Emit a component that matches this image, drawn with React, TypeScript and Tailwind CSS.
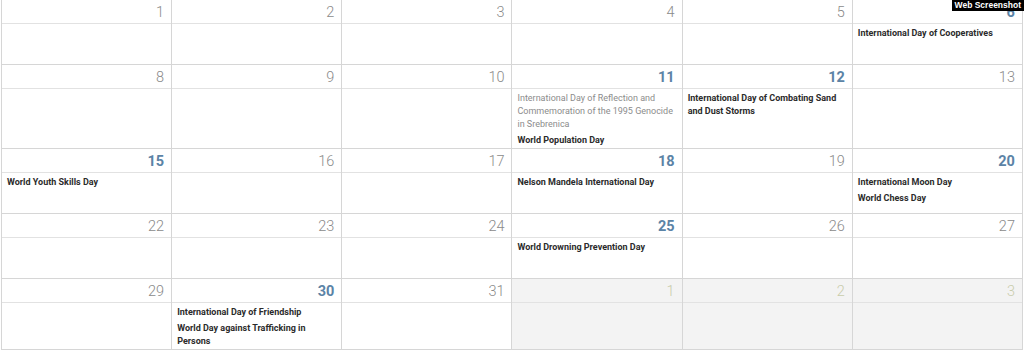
type Event = { title: string; muted?: boolean };

type Day = {
  n: number;
  outside?: boolean;
  events?: Event[];
};

// Monday–Saturday only; the Sunday column runs off the right edge of the view
const weeks: Day[][] = [
  [
    { n: 1 },
    { n: 2 },
    { n: 3 },
    { n: 4 },
    { n: 5 },
    { n: 6, events: [{ title: "International Day of Cooperatives" }] },
  ],
  [
    { n: 8 },
    { n: 9 },
    { n: 10 },
    {
      n: 11,
      events: [
        {
          title:
            "International Day of Reflection and Commemoration of the 1995 Genocide in Srebrenica",
          muted: true,
        },
        { title: "World Population Day" },
      ],
    },
    { n: 12, events: [{ title: "International Day of Combating Sand and Dust Storms" }] },
    { n: 13 },
  ],
  [
    { n: 15, events: [{ title: "World Youth Skills Day" }] },
    { n: 16 },
    { n: 17 },
    { n: 18, events: [{ title: "Nelson Mandela International Day" }] },
    { n: 19 },
    {
      n: 20,
      events: [{ title: "International Moon Day" }, { title: "World Chess Day" }],
    },
  ],
  [
    { n: 22 },
    { n: 23 },
    { n: 24 },
    { n: 25, events: [{ title: "World Drowning Prevention Day" }] },
    { n: 26 },
    { n: 27 },
  ],
  [
    { n: 29 },
    {
      n: 30,
      events: [
        { title: "International Day of Friendship" },
        { title: "World Day against Trafficking in Persons" },
      ],
    },
    { n: 31 },
    { n: 1, outside: true },
    { n: 2, outside: true },
    { n: 3, outside: true },
  ],
];

function DayCell({ day }: { day: Day }) {
  const hasEvents = Boolean(day.events?.length);
  const numberClass = day.outside
    ? "font-light text-[#c9ccab]"
    : hasEvents
      ? "font-bold text-[#5b83a6]"
      : "font-light text-[#8a8a8a]";

  return (
    <div
      className={`flex flex-col border-r border-[#d6d6d6] ${
        day.outside ? "bg-[#f3f3f3]" : "bg-white"
      }`}
    >
      <div
        className={`flex h-[24px] items-center justify-end border-b border-[#e2e2e2] pt-[3px] pr-[7px] text-[14.5px] leading-none ${numberClass}`}
      >
        {day.n}
      </div>
      <div className="flex min-h-[40px] flex-1 flex-col px-[5px] pb-[1px]">
        {day.events?.map((ev) => (
          <p
            key={ev.title}
            className={`pt-[3px] text-[9px] leading-[13px] ${
              ev.muted ? "font-normal text-[#8c8c8c]" : "font-bold text-[#2b2b2b]"
            }`}
          >
            {ev.title}
          </p>
        ))}
      </div>
    </div>
  );
}

export default function App() {
  return (
    <div className="relative h-[351px] w-[1024px] overflow-hidden bg-white font-['Roboto',sans-serif]">
      <div className="ml-px w-fit border-l border-[#d6d6d6]">
        {weeks.map((week, wi) => (
          <div
            key={wi}
            className="grid grid-cols-[repeat(6,170.17px)] border-b border-[#d6d6d6]"
          >
            {week.map((day, di) => (
              <DayCell key={di} day={day} />
            ))}
          </div>
        ))}
      </div>
      <div className="absolute right-0 top-0 bg-black px-[3px] font-['Liberation_Sans',sans-serif] text-[8.5px] leading-[11px] font-bold text-white">
        Web Screenshot
      </div>
    </div>
  );
}
